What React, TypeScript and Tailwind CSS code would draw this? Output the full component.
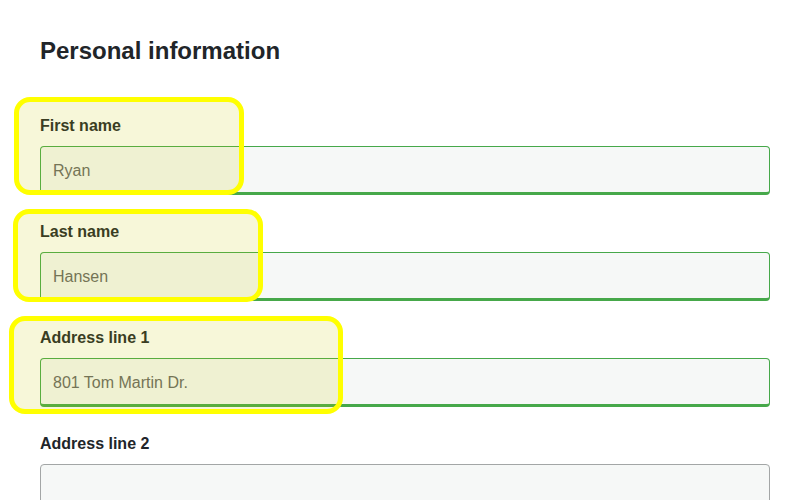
const fields = [
  { id: 'first-name', label: 'First name', value: 'Ryan', valid: true },
  { id: 'last-name', label: 'Last name', value: 'Hansen', valid: true },
  { id: 'address-1', label: 'Address line 1', value: '801 Tom Martin Dr.', valid: true },
  { id: 'address-2', label: 'Address line 2', value: '', valid: false },
];

// annotation boxes drawn over the form
const highlights = [
  { left: 14, top: 97, width: 230, height: 98 },
  { left: 13, top: 209, width: 250, height: 93 },
  { left: 9, top: 316, width: 334, height: 98 },
];

export default function App() {
  return (
    <div
      className="relative w-[800px] h-[500px] overflow-hidden bg-white text-[#212529]"
      style={{ fontFamily: '"Liberation Sans", Arial, sans-serif' }}
    >
      <div className="pt-[35px] pl-10 pr-[30px]">
        <h2 className="text-[24px] leading-[32px] font-bold mb-[46px]">Personal information</h2>

        <div className="flex flex-col gap-6">
          {fields.map(field => (
            <div key={field.id} className="flex flex-col">
              <label htmlFor={field.id} className="text-[16px] leading-[26px] font-bold mb-[7px]">
                {field.label}
              </label>
              <input
                id={field.id}
                defaultValue={field.value}
                className={`h-[49px] w-full rounded-[4px] bg-[#f6f8f7] px-3 pt-[3px] text-[16px] text-[#666] outline-none border ${
                  field.valid ? 'border-[#46a84a] border-b-[3px]' : 'border-[#a3a6a6]'
                }`}
                style={{ fontFamily: '"Liberation Sans", Arial, sans-serif' }}
              />
            </div>
          ))}
        </div>
      </div>

      {highlights.map((h, i) => (
        <div
          key={i}
          className="absolute rounded-[16px] border-[5px] border-[#ffff00] bg-[rgba(200,200,0,0.15)] pointer-events-none"
          style={{ left: h.left, top: h.top, width: h.width, height: h.height }}
        />
      ))}
    </div>
  );
}
